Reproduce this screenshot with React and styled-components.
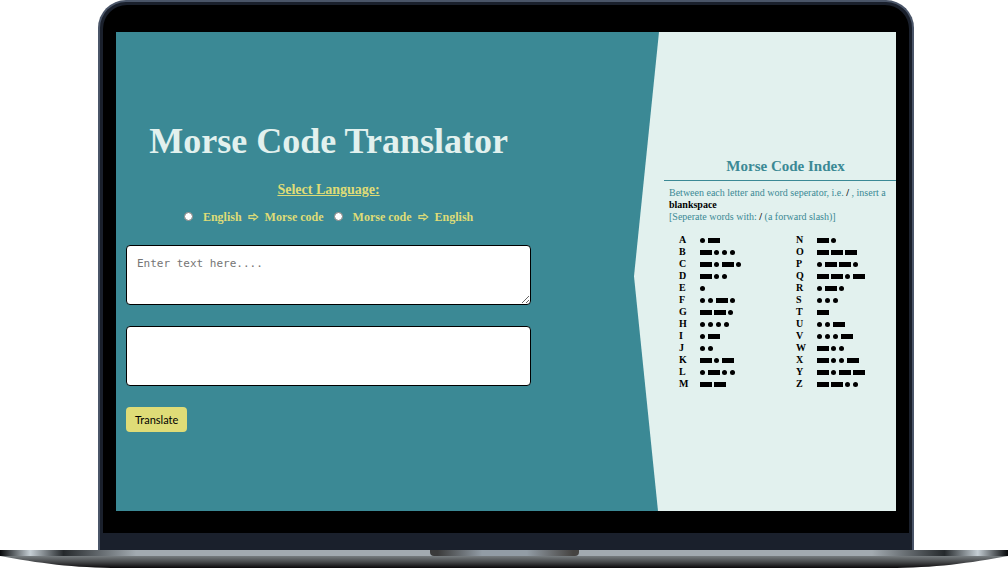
import React, { useState } from "react";
import styled, { createGlobalStyle, css } from "styled-components";

const colors = {
  teal: "#3b8995",
  mint: "#e2f1ee",
  yellow: "#dfdc77",
};

const GlobalStyle = createGlobalStyle`
  * { box-sizing: border-box; }
  body { margin: 0; background: #fff; font-family: "Liberation Serif", serif; }
  h1, h2, p { margin: 0; }
`;

const Laptop = styled.div`
  width: 100%;
`;

const Lid = styled.div`
  margin: 0 94px 0 98px;
  border: 2px solid #4a5568;
  border-bottom: 0;
  border-radius: 28px 28px 0 0;
  background: #1a202c;
  padding: 3px 3px 17px;
`;

const Bezel = styled.div`
  background: #000;
  border-radius: 24px 24px 0 0;
  padding: 27px 13px 22px;
`;

const Screen = styled.div`
  display: flex;
  justify-content: space-between;
  aspect-ratio: 780 / 479;
  background: ${colors.teal};
`;

const Translator = styled.main`
  flex: 0 0 54%;
  display: flex;
  flex-direction: column;
  justify-content: center;
  padding: 10px 6px 0 10px;
`;

const Title = styled.h1`
  color: ${colors.mint};
  font-size: 36px;
  line-height: 38px;
  text-align: center;
`;

const Languages = styled.fieldset`
  border: 0;
  margin: 22px 0 20px;
  padding: 0;
  color: ${colors.yellow};
  font-weight: bold;
  text-align: center;
`;

const Legend = styled.legend`
  margin: 0 auto;
  padding: 0 0 12px;
  font-size: 14px;
  line-height: 16px;
  text-decoration: underline;
`;

const Options = styled.div`
  display: flex;
  justify-content: center;
  gap: 10px;
`;

const Option = styled.label`
  display: flex;
  align-items: center;
  gap: 6px;
  font-size: 12px;
  line-height: 15px;
`;

const Radio = styled.input`
  width: 9px;
  height: 9px;
  margin: 0 4px 2px 0;
`;

const ArrowIcon = styled.svg`
  width: 11px;
  height: 8px;
  fill: none;
  stroke: currentColor;
  stroke-width: 1.2;
`;

const field = css`
  display: block;
  width: 100%;
  height: 60px;
  border: 1px solid #000;
  border-radius: 4px;
  background: #fff;
  margin-bottom: 21px;
  padding: 11px 10px;
  font-family: "DejaVu Sans Mono", monospace;
  font-size: 11px;
  line-height: 14px;
`;

const Input = styled.textarea`
  ${field}
  resize: both;
`;

const Output = styled.output`
  ${field}
`;

const Button = styled.button`
  align-self: flex-start;
  border: 0;
  border-radius: 4px;
  background: ${colors.yellow};
  color: #000;
  padding: 5px 9px;
  font-family: Lato, sans-serif;
  font-size: 11px;
  line-height: 15px;
`;

const IndexPanel = styled.aside`
  flex: 0 0 262px;
  display: flex;
  flex-direction: column;
  justify-content: center;
  padding: 4px 0 0 30px;
  background: ${colors.mint};
  clip-path: polygon(25px 0, 100% 0, 100% 100%, 24px 100%, 0 51%);
`;

const IndexTitle = styled.h2`
  border-bottom: 1px solid ${colors.teal};
  padding: 0 0 5px 11px;
  color: ${colors.teal};
  font-size: 15px;
  line-height: 18px;
  text-align: center;
`;

const Note = styled.p`
  padding: 6px 5px 11px;
  color: ${colors.teal};
  font-size: 10px;
  line-height: 12px;
`;

const Strong = styled.b`
  color: #000;
`;

const Tables = styled.div`
  display: grid;
  grid-template-columns: 117px auto;
  padding-left: 15px;
`;

const Table = styled.table`
  width: 100%;
  border-collapse: collapse;
  font-size: 10px;
  line-height: 12px;
`;

const Letter = styled.th`
  width: 21px;
  padding: 0;
  text-align: left;
`;

const Code = styled.td`
  padding: 0;
`;

const Signals = styled.div`
  display: flex;
  align-items: center;
  height: 12px;
`;

const Signal = styled.span`
  width: ${(p) => (p.$long ? "12px" : "5px")};
  height: 5px;
  margin-right: ${(p) => (p.$long ? "2px" : "3px")};
  border-radius: ${(p) => (p.$long ? "0" : "50%")};
  background: #000;
`;

const Base = styled.div`
  height: 18px;
`;

const Deck = styled.div`
  display: flex;
  justify-content: center;
  height: 6px;
  background: linear-gradient(
    to right,
    #050709 0, #c5ced4 3%, #25292c 6.3%, #a2aab0 13.5%,
    #a2aab0 86.5%, #25292c 93.7%, #c5ced4 97%, #050709 100%
  );
`;

const Notch = styled.div`
  width: 149px;
  border-radius: 0 0 4px 4px;
  background: linear-gradient(to right, #3a3a3a 5%, #929ca5 35%, #929ca5 65%, #454341 96%);
`;

const Underside = styled.svg`
  display: block;
  width: 100%;
  height: 12px;
`;

const firstHalf = [
  ["A", ".-"], ["B", "-..."], ["C", "-.-."], ["D", "-.."], ["E", "."],
  ["F", "..-."], ["G", "--."], ["H", "...."], ["I", ".-"], ["J", ".."],
  ["K", "-.-"], ["L", ".-.."], ["M", "--"],
];

const secondHalf = [
  ["N", "-."], ["O", "---"], ["P", ".--."], ["Q", "--.-"], ["R", ".-."],
  ["S", "..."], ["T", "-"], ["U", "..-"], ["V", "...-"], ["W", "-.."],
  ["X", "-..-"], ["Y", "-.--"], ["Z", "--.."],
];

function Arrow() {
  return (
    <ArrowIcon viewBox="0 0 11 8" role="img" aria-label="to">
      <path d="M1 2.6H6V1L9.8 4L6 7V5.4H1Z" />
    </ArrowIcon>
  );
}

function CodeTable({ rows }) {
  return (
    <Table>
      <tbody>
        {rows.map(([letter, code]) => (
          <tr key={letter}>
            <Letter scope="row">{letter}</Letter>
            <Code>
              <Signals role="img" aria-label={code}>
                {[...code].map((c, i) => (
                  <Signal key={i} $long={c === "-"} />
                ))}
              </Signals>
            </Code>
          </tr>
        ))}
      </tbody>
    </Table>
  );
}

export default function App() {
  const [text, setText] = useState("");
  return (
    <>
      <GlobalStyle />
      <Laptop>
        <Lid>
          <Bezel>
            <Screen>
              <Translator>
                <Title>Morse Code Translator</Title>
                <Languages>
                  <Legend>Select Language:</Legend>
                  <Options>
                    <Option>
                      <Radio type="radio" name="direction" value="encode" />
                      <span>English</span>
                      <Arrow />
                      <span>Morse code</span>
                    </Option>
                    <Option>
                      <Radio type="radio" name="direction" value="decode" />
                      <span>Morse code</span>
                      <Arrow />
                      <span>English</span>
                    </Option>
                  </Options>
                </Languages>
                <Input
                  aria-label="Text to translate"
                  placeholder="Enter text here...."
                  value={text}
                  onChange={(e) => setText(e.target.value)}
                />
                <Output aria-label="Translation" />
                <Button type="button">Translate</Button>
              </Translator>
              <IndexPanel>
                <IndexTitle>Morse Code Index</IndexTitle>
                <Note>
                  Between each letter and word seperator, i.e. <Strong>/</Strong> , insert a{" "}
                  <Strong>blankspace</Strong>
                  <br />
                  [Seperate words with: <Strong>/</Strong> (a forward slash)]
                </Note>
                <Tables>
                  <CodeTable rows={firstHalf} />
                  <CodeTable rows={secondHalf} />
                </Tables>
              </IndexPanel>
            </Screen>
          </Bezel>
        </Lid>
        <Base>
          <Deck>
            <Notch />
          </Deck>
          <Underside viewBox="0 0 1008 12" preserveAspectRatio="none" aria-hidden="true">
            <defs>
              <linearGradient id="under" x1="0" y1="0" x2="0" y2="1">
                <stop offset="0" stopColor="#777d80" />
                <stop offset="0.5" stopColor="#46484a" />
                <stop offset="1" stopColor="#0b090b" />
              </linearGradient>
            </defs>
            <path d="M0 0H1008C970 7 935 12 888 12H120C73 12 38 7 0 0Z" fill="url(#under)" />
          </Underside>
        </Base>
      </Laptop>
    </>
  );
}
